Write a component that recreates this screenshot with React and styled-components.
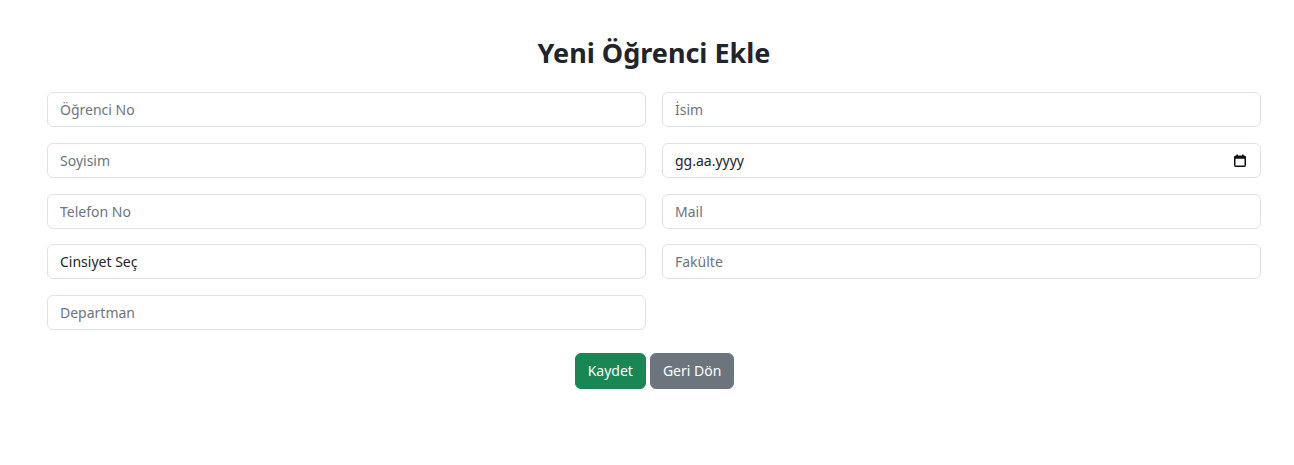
import React from 'react';
import styled, { createGlobalStyle } from 'styled-components';

const GlobalStyle = createGlobalStyle`
  * { box-sizing: border-box; }
  body {
    margin: 0;
    background: #fff;
    color: #212529;
    font-family: "Noto Sans", "Open Sans", sans-serif;
  }
`;

const Page = styled.div`
  margin: 0 33px 0 47px;
  padding-top: 37px;
`;

const Title = styled.h2`
  margin: 0 0 23px;
  text-align: center;
  font-size: 27px;
  font-weight: 700;
  line-height: 32px;
  color: #212529;
`;

const Grid = styled.div`
  display: grid;
  grid-template-columns: 1fr 1fr;
  column-gap: 16px;
  row-gap: 15.75px;
`;

const fieldBase = `
  display: block;
  width: 100%;
  height: 35px;
  padding: 6px 12px;
  font-family: "Noto Sans", "Open Sans", sans-serif;
  font-size: 14px;
  line-height: 21px;
  color: #212529;
  background: #fff;
  border: 1px solid #dee2e6;
  border-radius: 6px;
  outline: none;
`;

const Input = styled.input`
  ${fieldBase}
  &::placeholder { color: #6c757d; opacity: 1; }
`;

const Select = styled.select`
  ${fieldBase}
  appearance: none;
  -webkit-appearance: none;
`;

const DateField = styled.label`
  ${fieldBase}
  display: flex;
  align-items: center;
  justify-content: space-between;
  padding-right: 14px;
`;

const Actions = styled.div`
  display: flex;
  justify-content: center;
  gap: 4px;
  margin-top: 23px;
  padding-left: 1px;
`;

const Button = styled.button`
  height: 36px;
  padding: 6px 12px;
  font-family: "Noto Sans", "Open Sans", sans-serif;
  font-size: 14px;
  line-height: 22px;
  color: #fff;
  background: ${p => (p.$variant === 'success' ? '#198754' : '#6c757d')};
  border: 1px solid ${p => (p.$variant === 'success' ? '#198754' : '#6c757d')};
  border-radius: 6px;
  cursor: pointer;
`;

const CalendarIcon = () => (
  <svg width="12" height="13" viewBox="0 0 12 13" aria-hidden="true">
    <rect x="0.75" y="2.25" width="10.5" height="10" rx="1" fill="none" stroke="#111" strokeWidth="1.5" />
    <rect x="0.75" y="2.25" width="10.5" height="2.5" fill="#111" />
    <rect x="2.5" y="0.5" width="1.5" height="2.5" fill="#111" />
    <rect x="8" y="0.5" width="1.5" height="2.5" fill="#111" />
  </svg>
);

export default function App() {
  return (
    <>
      <GlobalStyle />
      <Page>
        <Title>Yeni Öğrenci Ekle</Title>
        <Grid>
          <Input placeholder="Öğrenci No" />
          <Input placeholder="İsim" />
          <Input placeholder="Soyisim" />
          <DateField>
            <span>gg.aa.yyyy</span>
            <CalendarIcon />
          </DateField>
          <Input placeholder="Telefon No" />
          <Input placeholder="Mail" />
          <Select defaultValue="">
            <option value="">Cinsiyet Seç</option>
            <option value="E">Erkek</option>
            <option value="K">Kadın</option>
          </Select>
          <Input placeholder="Fakülte" />
          <Input placeholder="Departman" />
        </Grid>
        <Actions>
          <Button $variant="success">Kaydet</Button>
          <Button $variant="secondary">Geri Dön</Button>
        </Actions>
      </Page>
    </>
  );
}
